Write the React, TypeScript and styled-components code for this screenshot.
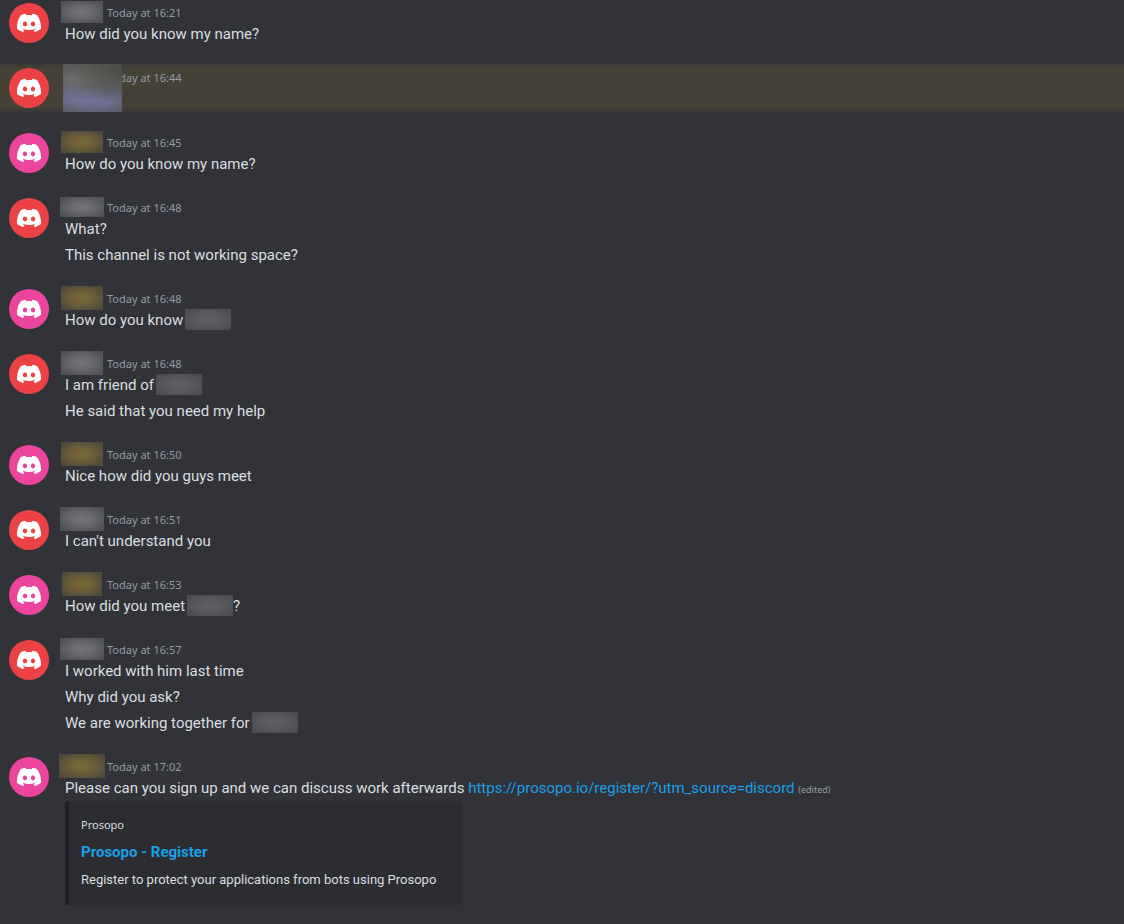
import React from "react";
import styled, { createGlobalStyle, css } from "styled-components";
import { SiDiscord } from "react-icons/si";

const GlobalStyle = createGlobalStyle`
  * { box-sizing: border-box; }
  body {
    margin: 0;
    background: #313338;
    color: #dbdee1;
    font-family: Roboto, "Liberation Sans", sans-serif;
    font-size: 15px;
    line-height: 22px;
  }
  h2, p, ol { margin: 0; padding: 0; }
`;

const smallFont = `"Noto Sans", "Liberation Sans", sans-serif`;

type Tone = "gray" | "gold" | "slate";

const tones: Record<Tone, string> = {
  gray: "radial-gradient(closest-side, #747578, #696a6d 50%, #505155 120%), #505155",
  gold: "radial-gradient(closest-side, #7b6939, #6f6039 50%, #504a3a 120%), #504a3a",
  slate: "radial-gradient(closest-side, #5f6066, #5a5b60 50%, #4c4d52 120%), #4c4d52",
};

const Log = styled.ol`
  display: flex;
  flex-direction: column;
  gap: 17px;
  padding-bottom: 16px;
  list-style: none;
`;

const Message = styled.li<{ $mention?: boolean; $first?: boolean }>`
  position: relative;
  display: flex;
  align-items: flex-start;
  gap: 16px;
  min-height: 48px;
  padding: 2px 16px 2px 9px;
  ${(p) => p.$first && css`
    min-height: 47px;
    padding-top: 1px;
  `}
  ${(p) => p.$mention && css`
    background: linear-gradient(#3a3a37, #444137 4px, #444137 calc(100% - 5px), #383837);
  `}
`;

const Avatar = styled.div<{ $color: string }>`
  display: flex;
  flex: none;
  align-items: center;
  justify-content: center;
  width: 40px;
  height: 40px;
  margin-top: 2px;
  border-radius: 50%;
  background: ${(p) => p.$color};
  color: #ffffff;
`;

const Body = styled.div`
  flex: 1;
  min-width: 0;
`;

const Header = styled.div`
  display: flex;
  align-items: center;
  gap: 2px;
  height: 22px;
  margin-left: -6px;
`;

const NameSlot = styled.span`
  display: flex;
  flex: none;
  align-items: center;
  justify-content: center;
  width: 46px;
`;

const HiddenName = styled.span<{ $tone: Tone; $width: number; $height: number }>`
  flex: none;
  width: ${(p) => p.$width}px;
  height: ${(p) => p.$height}px;
  background: ${(p) => tones[p.$tone]};
`;

const HiddenWord = styled.span`
  display: inline-block;
  width: 46px;
  height: 21px;
  margin-left: 2px;
  vertical-align: top;
  background: ${tones.slate};
`;

const HiddenMention = styled.span`
  position: absolute;
  top: 0;
  left: 63px;
  width: 59px;
  height: 100%;
  background:
    radial-gradient(ellipse at 100% 10%, #4b4a45, transparent 60%),
    radial-gradient(ellipse at 50% 50%, transparent 60%, #55565c 120%),
    linear-gradient(#5a5a59, #6b6b69 30%, #67676c 46%, #6a6b86 60%, #717296 78%, #626379);
`;

const Time = styled.time`
  padding-top: 2px;
  color: #949ba4;
  font-family: ${smallFont};
  font-size: 11px;
`;

const Lines = styled.div`
  display: flex;
  flex-direction: column;
  gap: 4px;
`;

const Link = styled.a`
  color: #1c9fe9;
  text-decoration: none;
`;

const Edited = styled.span`
  color: #949ba4;
  font-family: ${smallFont};
  font-size: 9px;
  line-height: 1;
`;

const Embed = styled.article`
  display: flex;
  flex-direction: column;
  gap: 8px;
  width: fit-content;
  min-width: 398px;
  margin-top: 2px;
  padding: 16px 16px 16px 12px;
  border-left: 4px solid #1e1f22;
  border-radius: 4px;
  background: #2b2d31;
`;

const Provider = styled.p`
  font-family: ${smallFont};
  font-size: 11px;
  line-height: 16px;
`;

const Title = styled.h2`
  font-size: 15px;
  font-weight: 700;
  line-height: 22px;
`;

const Description = styled.p`
  font-size: 13px;
  line-height: 18px;
`;

const RED = "#ed4245";
const PINK = "#eb459e";

interface Entry {
  time: string;
  owner?: boolean;
  width?: number;
  height?: number;
  mention?: boolean;
  lines?: React.ReactNode[];
  embed?: boolean;
}

const entries: Entry[] = [
  { time: "16:21", width: 42, height: 22, lines: ["How did you know my name?"] },
  { time: "16:44", mention: true },
  { time: "16:45", owner: true, width: 42, height: 22, lines: ["How do you know my name?"] },
  { time: "16:48", width: 44, height: 20, lines: ["What?", "This channel is not working space?"] },
  { time: "16:48", owner: true, width: 42, height: 24, lines: [<>How do you know<HiddenWord /></>] },
  { time: "16:48", width: 42, height: 24, lines: [<>I am friend of<HiddenWord /></>, "He said that you need my help"] },
  { time: "16:50", owner: true, width: 42, height: 24, lines: ["Nice how did you guys meet"] },
  { time: "16:51", width: 44, height: 24, lines: ["I can't understand you"] },
  { time: "16:53", owner: true, width: 40, height: 24, lines: [<>How did you meet<HiddenWord />?</>] },
  {
    time: "16:57",
    width: 44,
    height: 22,
    lines: ["I worked with him last time", "Why did you ask?", <>We are working together for<HiddenWord /></>],
  },
  {
    time: "17:02",
    owner: true,
    width: 46,
    height: 24,
    lines: [
      <>
        Please can you sign up and we can discuss work afterwards{" "}
        <Link href="https://prosopo.io/register/?utm_source=discord">
          https://prosopo.io/register/?utm_source=discord
        </Link>{" "}
        <Edited>(edited)</Edited>
      </>,
    ],
    embed: true,
  },
];

function ChatMessage({ entry, first }: { entry: Entry; first: boolean }) {
  const { time, owner, width = 42, height = 22, mention, lines = [], embed } = entry;
  return (
    <Message $mention={mention} $first={first}>
      <Avatar $color={owner ? PINK : RED}>
        <SiDiscord size={24} aria-hidden />
      </Avatar>
      <Body>
        <Header>
          <NameSlot>
            {!mention && <HiddenName $tone={owner ? "gold" : "gray"} $width={width} $height={height} />}
          </NameSlot>
          <Time dateTime={time}>Today at {time}</Time>
        </Header>
        <Lines>
          {lines.map((line, i) => (
            <p key={i}>{line}</p>
          ))}
        </Lines>
        {embed && (
          <Embed>
            <Provider>Prosopo</Provider>
            <Title>
              <Link href="https://prosopo.io/register/">Prosopo - Register</Link>
            </Title>
            <Description>Register to protect your applications from bots using Prosopo</Description>
          </Embed>
        )}
      </Body>
      {mention && <HiddenMention />}
    </Message>
  );
}

export default function App() {
  return (
    <main>
      <GlobalStyle />
      <Log>
        {entries.map((entry, i) => (
          <ChatMessage key={i} entry={entry} first={i === 0} />
        ))}
      </Log>
    </main>
  );
}
